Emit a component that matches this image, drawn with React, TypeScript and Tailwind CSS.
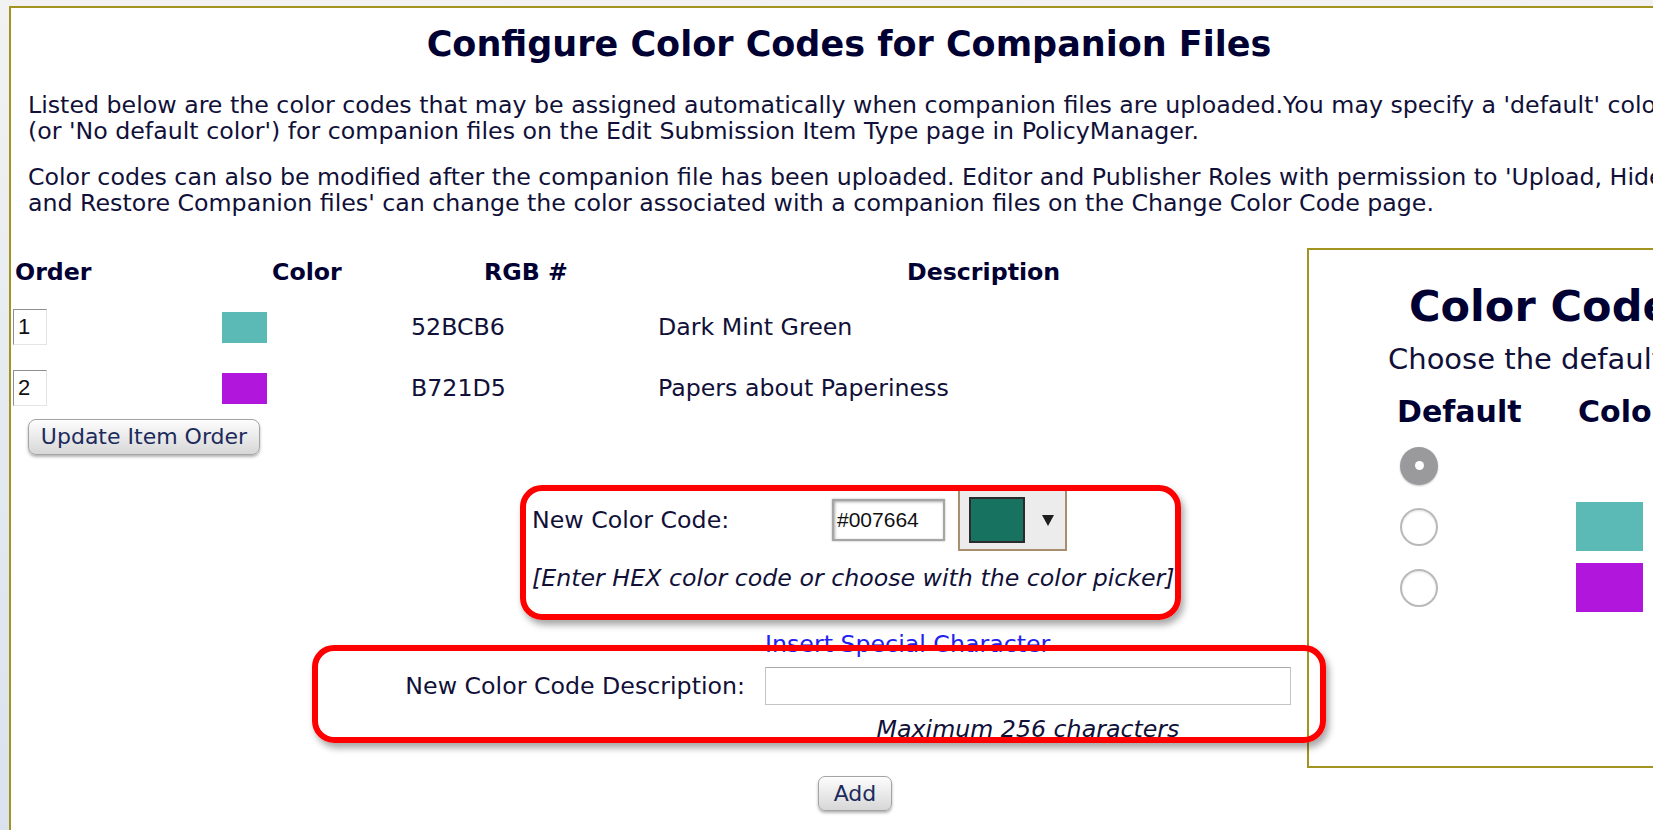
import React from "react";

type Row = { order: string; color: string; hex: string; desc: string };

const rows: Row[] = [
  { order: "1", color: "#5bbab5", hex: "52BCB6", desc: "Dark Mint Green" },
  { order: "2", color: "#b016dc", hex: "B721D5", desc: "Papers about Paperiness" },
];

function OrderInput({ value }: { value: string }) {
  return (
    <div className="flex h-[36px] w-[34px] items-center border border-t-[#8f8f8f] border-l-[#8f8f8f] border-r-[#e4e4e4] border-b-[#e4e4e4] bg-white pl-[4px] font-['Liberation_Sans',sans-serif] text-[22px] text-[#111]">
      {value}
    </div>
  );
}

function Radio({ checked }: { checked?: boolean }) {
  if (checked) {
    return (
      <div className="flex h-[38px] w-[38px] items-center justify-center rounded-full bg-[#9a9a9c] shadow-[0_1px_2px_rgba(0,0,0,0.25)]">
        <div className="h-[9px] w-[9px] rounded-full bg-white" />
      </div>
    );
  }
  return <div className="h-[38px] w-[38px] rounded-full border-2 border-[#b9b9b9] bg-white shadow-[inset_0_1px_2px_rgba(0,0,0,0.12)]" />;
}

export default function App() {
  return (
    <div className="relative h-[830px] w-[1653px] overflow-hidden bg-gradient-to-b from-[#f2f2f2] to-[#d9e2ee] pl-[9px] pt-[6px] font-['DejaVu_Sans','Verdana',sans-serif]">
      {/* main page panel */}
      <div className="h-[900px] w-[1720px] border-l-2 border-t-2 border-[#a3941f] bg-white text-[23.7px] leading-[26px] text-[#101038]">
        <div className="w-[1676px]">
          <h1 className="pt-[16px] text-center text-[35px] font-bold leading-[40px] text-[#000033]">
            Configure Color Codes for Companion Files
          </h1>

          <p className="mt-[28px] whitespace-nowrap pl-[17px]">
            Listed below are the color codes that may be assigned automatically when companion files are uploaded.You may specify a 'default' color
            <br />
            (or 'No default color') for companion files on the Edit Submission Item Type page in PolicyManager.
          </p>
          <p className="mt-[20px] whitespace-nowrap pl-[17px]">
            Color codes can also be modified after the companion file has been uploaded. Editor and Publisher Roles with permission to 'Upload, Hide,
            <br />
            and Restore Companion files' can change the color associated with a companion files on the Change Color Code page.
          </p>

          {/* color code table */}
          <div className="ml-[2px] mt-[43px]">
            <div className="flex h-[26px] items-center font-bold text-[#000033]">
              <div className="w-[209px] pl-[2px]">Order</div>
              <div className="w-[189px] pl-[50px]">Color</div>
              <div className="w-[247px] pl-[73px]">RGB #</div>
              <div className="w-[600px] pl-[249px]">Description</div>
            </div>
            {rows.map((r, i) => (
              <div key={r.order} className={`flex h-[36px] items-center ${i === 0 ? "mt-[24px]" : "mt-[25px]"}`}>
                <div className="w-[209px]">
                  <OrderInput value={r.order} />
                </div>
                <div className="w-[189px]">
                  <div className="h-[31px] w-[45px]" style={{ backgroundColor: r.color }} />
                </div>
                <div className="w-[247px]">{r.hex}</div>
                <div className="w-[600px]">{r.desc}</div>
              </div>
            ))}
          </div>

          <button className="ml-[17px] mt-[13px] h-[36px] w-[232px] rounded-[8px] border border-[#a4a4a4] bg-gradient-to-b from-[#fdfdfd] to-[#d7d7d7] text-[22px] leading-none text-[#1c2b5c] shadow-[0_2px_3px_rgba(0,0,0,0.3)]">
            Update Item Order
          </button>

          {/* new color code */}
          <div className="ml-[521px] mt-[34px]">
            <div className="flex h-[62px] items-center">
              <div className="w-[300px]">New Color Code:</div>
              <div className="flex h-[42px] w-[113px] items-center border-2 border-[#a5a5a5] bg-white pl-[3px] font-['Liberation_Sans',sans-serif] text-[21px] text-[#111] shadow-[inset_1px_1px_3px_rgba(0,0,0,0.35),0_0_2px_rgba(0,0,0,0.3)]">
                #007664
              </div>
              <div className="ml-[13px] flex h-[62px] w-[109px] items-center border-2 border-[#a88e6c] bg-[#ececec] pl-[9px]">
                <div className="h-[46px] w-[56px] border-2 border-[#2b2b2b] bg-[#177260]" />
                <svg className="ml-[17px]" width="12" height="11" viewBox="0 0 12 11">
                  <path d="M0 0 H12 L6 11 Z" fill="#1e1e1e" />
                </svg>
              </div>
            </div>
            <div className="mt-[14px] whitespace-nowrap italic">[Enter HEX color code or choose with the color picker]</div>
          </div>

          <div className="ml-[754px] mt-[40px] text-[#2222ee]">Insert Special Character</div>

          {/* description */}
          <div className="mt-[10px] flex h-[38px] items-center">
            <div className="w-[734px] text-right">New Color Code Description:</div>
            <div className="ml-[20px] h-[38px] w-[526px] border border-[#c4c4c4] border-t-[#a9a9a9] bg-white" />
          </div>
          <div className="ml-[754px] mt-[11px] w-[526px] text-center italic">Maximum 256 characters</div>

          <button className="ml-[807px] mt-[34px] h-[35px] w-[74px] rounded-[7px] border border-[#a4a4a4] bg-gradient-to-b from-[#fdfdfd] to-[#d7d7d7] text-[22px] leading-none text-[#1c2b5c] shadow-[0_2px_3px_rgba(0,0,0,0.3)]">
            Add
          </button>
        </div>
      </div>

      {/* inset: default color chooser */}
      <div className="absolute left-[1307px] top-[248px] h-[520px] w-[420px] border-2 border-[#a3941f] bg-white text-[#000033]">
        <div className="whitespace-nowrap pl-[100px] pt-[28px] text-[43px] font-bold leading-[56px]">Color Codes</div>
        <div className="mt-[7px] whitespace-nowrap pl-[79px] text-[29px] leading-[36px] text-[#101038]">Choose the default color</div>
        <div className="mt-[17px] flex whitespace-nowrap pl-[88px] text-[30px] font-bold leading-[36px]">
          <div className="w-[181px]">Default</div>
          <div>Color</div>
        </div>
        <div className="mt-[5px] pl-[91px]">
          <div className="flex h-[61px] items-center">
            <Radio checked />
          </div>
          <div className="flex h-[61px] items-center">
            <Radio />
            <div className="ml-[138px] h-[49px] w-[67px] bg-[#5bbab5]" />
          </div>
          <div className="flex h-[61px] items-center">
            <Radio />
            <div className="ml-[138px] h-[49px] w-[67px] bg-[#b016dc]" />
          </div>
        </div>
      </div>

      {/* red callout outlines */}
      <div className="absolute left-[520px] top-[485px] h-[135px] w-[661px] rounded-[22px] border-[6px] border-[#ff0000] shadow-[3px_5px_7px_rgba(0,0,0,0.35)]" />
      <div className="absolute left-[312px] top-[645px] h-[98px] w-[1014px] rounded-[22px] border-[6px] border-[#ff0000] shadow-[3px_5px_7px_rgba(0,0,0,0.35)]" />
    </div>
  );
}
